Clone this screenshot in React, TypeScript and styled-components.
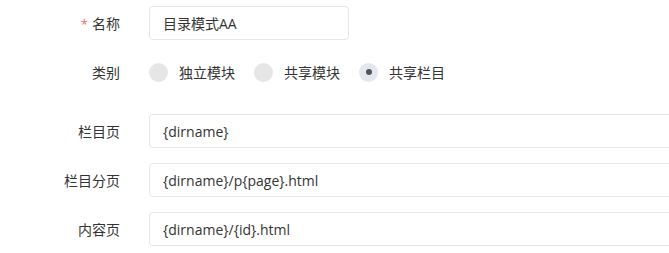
import React, { useState } from "react";
import styled, { createGlobalStyle } from "styled-components";

const GlobalStyle = createGlobalStyle`
  html, body {
    margin: 0;
    background: #ffffff;
    overflow: hidden;
    font-family: "Open Sans", "Noto Sans CJK SC", sans-serif;
    color: #333333;
  }
`;

const Form = styled.div`
  padding-top: 6px;
  width: 100%;
  overflow: hidden;
`;

const Row = styled.div<{ $gap?: number }>`
  display: flex;
  align-items: center;
  height: 34px;
  margin-bottom: ${(p) => p.$gap ?? 15}px;
`;

const Label = styled.label`
  width: 120px;
  flex-shrink: 0;
  margin-right: 29px;
  text-align: right;
  font-size: 14px;
  color: #333;
`;

const Star = styled.span`
  color: #f56c6c;
  margin-right: 4px;
  font-size: 13px;
`;

const Input = styled.input<{ $width?: number }>`
  box-sizing: border-box;
  height: 34px;
  width: ${(p) => (p.$width ? `${p.$width}px` : "560px")};
  flex-shrink: 0;
  padding: 0 13px;
  border: 1px solid #e4e5ee;
  border-radius: 4px;
  font-family: "Open Sans", "Noto Sans CJK SC", sans-serif;
  font-size: 14px;
  color: #333;
  outline: none;
`;

const RadioGroup = styled.div`
  display: flex;
  align-items: center;
`;

const RadioItem = styled.label`
  display: flex;
  align-items: center;
  margin-right: 19px;
  font-size: 14px;
  color: #333;
  cursor: pointer;
`;

const Dot = styled.span<{ $on: boolean }>`
  width: 19px;
  height: 19px;
  border-radius: 50%;
  margin-right: 11px;
  background: ${(p) => (p.$on ? "#e5e7f0" : "#e6e6e6")};
  display: flex;
  align-items: center;
  justify-content: center;
  &::after {
    content: "";
    width: 6px;
    height: 6px;
    border-radius: 50%;
    background: #555;
    display: ${(p) => (p.$on ? "block" : "none")};
  }
`;

const types = ["独立模块", "共享模块", "共享栏目"];

export default function App() {
  const [type, setType] = useState(2);
  return (
    <>
      <GlobalStyle />
      <Form>
        <Row>
          <Label>
            <Star>*</Star>名称
          </Label>
          <Input $width={200} defaultValue="目录模式AA" />
        </Row>
        <Row $gap={25}>
          <Label>类别</Label>
          <RadioGroup>
            {types.map((t, i) => (
              <RadioItem key={t} onClick={() => setType(i)}>
                <Dot $on={type === i} />
                {t}
              </RadioItem>
            ))}
          </RadioGroup>
        </Row>
        <Row>
          <Label>栏目页</Label>
          <Input defaultValue="{dirname}" />
        </Row>
        <Row>
          <Label>栏目分页</Label>
          <Input defaultValue="{dirname}/p{page}.html" />
        </Row>
        <Row>
          <Label>内容页</Label>
          <Input defaultValue="{dirname}/{id}.html" />
        </Row>
      </Form>
    </>
  );
}
